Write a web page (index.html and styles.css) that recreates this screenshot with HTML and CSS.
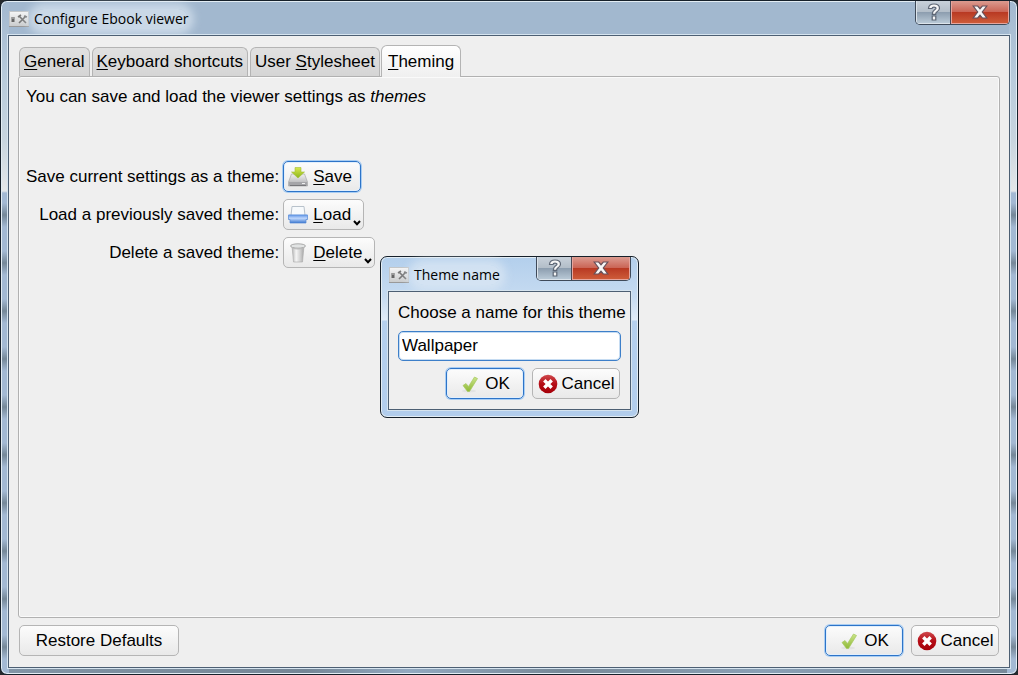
FILE: index.html
```html
<!DOCTYPE html>
<html lang="en">
<head>
<meta charset="utf-8">
<title>Configure Ebook viewer</title>
<link rel="stylesheet" href="styles.css">
</head>
<body>
<svg class="defs" aria-hidden="true">
  <defs>
    <linearGradient id="tool-bg" x2="0" y2="1"><stop stop-color="#f6f6f6"/><stop offset="1" stop-color="#c9cbcc"/></linearGradient>
    <linearGradient id="green" x2="0" y2="1"><stop stop-color="#cbe48a"/><stop offset="1" stop-color="#8fb936"/></linearGradient>
    <linearGradient id="arrow" x2="0" y2="1"><stop stop-color="#d8e84e"/><stop offset="1" stop-color="#8cb61d"/></linearGradient>
    <linearGradient id="red" x2="0" y2="1"><stop stop-color="#cf4a4e"/><stop offset=".5" stop-color="#b50d16"/><stop offset="1" stop-color="#a50009"/></linearGradient>
    <linearGradient id="drive" x2="0" y2="1"><stop stop-color="#f1f1f1"/><stop offset="1" stop-color="#a9a9ab"/></linearGradient>
    <linearGradient id="blue" x2="0" y2="1"><stop stop-color="#7eaaf0"/><stop offset=".45" stop-color="#b9d3fa"/><stop offset="1" stop-color="#3c78d0"/></linearGradient>
    <linearGradient id="can"><stop stop-color="#b5b5b5"/><stop offset=".35" stop-color="#f5f5f5"/><stop offset=".7" stop-color="#cfcfcf"/><stop offset="1" stop-color="#a5a5a5"/></linearGradient>
    <symbol id="i-tool" viewBox="0 0 20 16">
      <rect x=".5" y=".5" width="19" height="15" fill="url(#tool-bg)" stroke="#c3c6c8"/>
      <path d="M0 15.5h20" stroke="#999"/>
      <rect x="2.500" y="6" width="3" height="5" fill="#666"/><path d="M3 7h2" stroke="#ccc"/>
      <path d="M10 5l7 7M17 5l-7 7" stroke="#777" stroke-width="1.600"/><path d="M9 6l3-2M15 5l3 1" stroke="#777" stroke-width="1.600"/>
    </symbol>
    <symbol id="i-check" viewBox="0 0 20 20">
      <ellipse cx="9" cy="17" rx="7" ry="1.500" fill="#e2e2e2"/>
      <path d="M3 11.500l3-2 2.500 3L14.500 3l3 1.500L9.500 17.500H7.500z" fill="url(#green)" stroke="#a5c85e" stroke-width=".7"/>
    </symbol>
    <symbol id="i-cancel" viewBox="0 0 20 20">
      <circle cx="10" cy="10" r="9.300" fill="url(#red)"/>
      <path d="M6.300 6.300l7.400 7.400M13.700 6.300l-7.400 7.400" stroke="#fff" stroke-width="3.400"/>
    </symbol>
    <symbol id="i-save" viewBox="0 0 20 20">
      <path d="M3.500 7h13l3 8v4H.5v-4z" fill="url(#drive)" stroke="#aaa" stroke-width=".7"/>
      <path d="M1 15h18v4H1z" fill="#a5a5a8"/><path d="M2 18.500h16" stroke="#77777a"/><path d="M14 16.500h3" stroke="#eee"/>
      <path d="M7 .5h6V5h3.500L10 11 3.500 5H7z" fill="url(#arrow)" stroke="#a2bf37" stroke-width=".6"/>
    </symbol>
    <symbol id="i-load" viewBox="0 0 20 20">
      <path d="M4 1.500h12l1 9H3z" fill="#f7fafc" stroke="#b8c2cb"/>
      <path d="M.5 10h19v4.500H18v3.500H2v-3.500H.5z" fill="url(#blue)" stroke="#5386d4" stroke-width=".7"/>
      <path d="M.5 10.500h19" stroke="#6b9ce6" stroke-width="1.500"/>
    </symbol>
    <symbol id="i-trash" viewBox="0 0 20 20">
      <path d="M4 3h12l-1.500 16h-9z" fill="url(#can)" stroke="#aaa" stroke-width=".6"/>
      <ellipse cx="10" cy="3" rx="7.500" ry="2.200" fill="#e2e4e4" stroke="#989898" stroke-width=".8"/>
      <path d="M4 4.500c3 2 9 2 12 0" fill="none" stroke="#bbb"/>
    </symbol>
    <symbol id="i-help" viewBox="0 0 14 18">
      <path d="M1.500 5.500C1.500 2 4 1 7 1s5.500 1.500 5.500 4.300c0 2.200-1.500 3-3 4-.7.500-.8 1-.8 2H5.300c0-2.300.5-3.200 2-4.200C8.400 6.400 9 6 9 5.300c0-.8-.8-1.200-2-1.200S5.100 4.500 5 5.500zM5.200 13h3.600v4H5.200z" fill="#f5f5f5" stroke="#5d6675" stroke-width="1.200"/>
    </symbol>
    <symbol id="i-x" viewBox="0 0 16 14">
      <path d="M1.200 1h4.500L8 3.700 10.300 1h4.500l-4.500 6 4.500 6h-4.500L8 10.300 5.700 13H1.200l4.500-6z" fill="#f7f7f7" stroke="#68515a" stroke-width="1.200"/>
    </symbol>
    <symbol id="i-down" viewBox="0 0 8 6">
      <path d="M1 1l3 3.200L7 1" fill="none" stroke="#000" stroke-width="2"/>
    </symbol>
  </defs>
</svg>

<main class="window">
  <header class="titlebar">
    <svg class="app-icon"><use href="#i-tool"/></svg>
    <h1 class="title">Configure Ebook viewer</h1>
    <div class="controls">
      <button class="control" aria-label="Help"><svg class="glyph-help"><use href="#i-help"/></svg></button>
      <button class="control close" aria-label="Close"><svg class="glyph-x"><use href="#i-x"/></svg></button>
    </div>
  </header>
  <div class="client">
    <div class="tabs" role="tablist">
      <button class="tab" role="tab"><u>G</u>eneral</button>
      <button class="tab" role="tab"><u>K</u>eyboard shortcuts</button>
      <button class="tab" role="tab">User <u>S</u>tylesheet</button>
      <button class="tab active" role="tab" aria-selected="true"><u>T</u>heming</button>
    </div>
    <section class="pane" role="tabpanel">
      <p class="intro">You can save and load the viewer settings as <em>themes</em></p>
      <div class="form">
        <label for="save">Save current settings as a theme:</label>
        <button id="save" class="button focus"><svg class="icon"><use href="#i-save"/></svg><span><u>S</u>ave</span></button>
        <label for="load">Load a previously saved theme:</label>
        <button id="load" class="button menu"><svg class="icon"><use href="#i-load"/></svg><span><u>L</u>oad</span><svg class="down"><use href="#i-down"/></svg></button>
        <label for="delete">Delete a saved theme:</label>
        <button id="delete" class="button menu"><svg class="icon"><use href="#i-trash"/></svg><span><u>D</u>elete</span><svg class="down"><use href="#i-down"/></svg></button>
      </div>
    </section>
    <footer class="actions">
      <button class="button restore">Restore Defaults</button>
      <button class="button ok focus"><svg class="icon"><use href="#i-check"/></svg>OK</button>
      <button class="button cancel"><svg class="icon"><use href="#i-cancel"/></svg>Cancel</button>
    </footer>
  </div>
</main>

<div class="window dialog" role="dialog" aria-labelledby="dialog-title">
  <header class="titlebar">
    <svg class="app-icon"><use href="#i-tool"/></svg>
    <h2 class="title" id="dialog-title">Theme name</h2>
    <div class="controls">
      <button class="control" aria-label="Help"><svg class="glyph-help"><use href="#i-help"/></svg></button>
      <button class="control close" aria-label="Close"><svg class="glyph-x"><use href="#i-x"/></svg></button>
    </div>
  </header>
  <form class="client">
    <label for="name">Choose a name for this theme</label>
    <input id="name" class="field" type="text" value="Wallpaper">
    <div class="actions">
      <button type="button" class="button ok focus"><svg class="icon"><use href="#i-check"/></svg>OK</button>
      <button type="button" class="button cancel"><svg class="icon"><use href="#i-cancel"/></svg>Cancel</button>
    </div>
  </form>
</div>
</body>
</html>
```
FILE: styles.css
```css
* { box-sizing: border-box; }

body {
  margin: 0;
  background: #25292c;
  color: #000;
  font: 17px/22px "Liberation Sans", Arial, sans-serif;
}

button, input { font: inherit; color: inherit; margin: 0; }
svg { flex: none; }
.defs { position: absolute; width: 0; height: 0; }

.window {
  display: flex;
  flex-direction: column;
  min-height: 100vh;
  padding: 0 7px 6px;
  border: 1px solid #16202a;
  border-radius: 7px;
  box-shadow: inset 0 0 0 1px #e3edf4;
  background:
    linear-gradient(90deg, transparent 8px, #a2b8cf 8px, #a2b8cf calc(100% - 8px), transparent calc(100% - 8px)) 0 0 / 100% 34px no-repeat,
    linear-gradient(#a2b8cf 0, #b9ccdc 80px, #c8d5df 140px, #e4e7e9 190px, transparent 192px),
    linear-gradient(90deg, transparent 8px, #8294a5 8px, #758696 30%, #93a9c0 40%, #788998 55%, #8ba0b5 75%, #788999 99%, transparent 99%) 0 100% / 100% 7px no-repeat,
    repeating-linear-gradient(#a3b9d3 0, #a3b9d3 10px, #758898 22px, #a3b9d3 34px, #a3b9d3 48px);
}

.titlebar {
  display: flex;
  align-items: flex-start;
  height: 34px;
}
.app-icon { width: 20px; height: 16px; margin: 10px 5px 0 1px; }
.title {
  margin: 8px 0 0;
  border-radius: 12px;
  background: rgba(222, 234, 245, .65);
  box-shadow: 0 0 8px 6px rgba(222, 234, 245, .65);
  font: 14px/20px "Open Sans", "Noto Sans", sans-serif;
}
.controls {
  display: flex;
  margin-left: auto;
  border: 1px solid #3f4a59;
  border-top: 0;
  border-radius: 0 0 5px 5px;
  overflow: hidden;
}
.control {
  display: flex;
  align-items: center;
  justify-content: center;
  width: 35px;
  height: 23px;
  padding: 0;
  border: 1px solid #dce4eb;
  border-top: 0;
  background: linear-gradient(#c8d1da, #b3bec9 48%, #8b9cae 50%, #b8c8d5);
}
.control.close {
  width: 58px;
  border-color: #e7a59d;
  box-shadow: -1px 0 #4b4853;
  background: linear-gradient(#dc9b90, #cb6657 48%, #b83822 50%, #cd5b39);
}
.glyph-help { width: 14px; height: 18px; }
.glyph-x { width: 16px; height: 14px; }

.client {
  display: flex;
  flex: 1;
  flex-direction: column;
  padding: 9px 9px 11px;
  border: 1px solid #4d5f73;
  box-shadow: 0 0 0 1px #d6e4ef;
  background: #efefef;
}

.tabs { display: flex; align-items: flex-end; gap: 2px; padding-left: 1px; }
.tab {
  height: 29px;
  padding: 0 4px;
  border: 1px solid #b4b4b4;
  border-bottom: 0;
  border-radius: 6px 6px 0 0;
  background: linear-gradient(#e1e1e1, #d5d5d5);
  white-space: nowrap;
}
.tab.active {
  z-index: 1;
  height: 32px;
  margin: 0 0 -1px -1px;
  padding: 0 6px;
  background: linear-gradient(#fff, #efefef);
}

.pane {
  flex: 1;
  padding: 9px 7px;
  border: 1px solid #b1b1b1;
  border-radius: 3px;
  box-shadow: inset 0 0 0 1px #fafafa;
}
.intro { margin: 0 0 53px; }
.form {
  display: grid;
  grid-template-columns: max-content max-content;
  align-items: center;
  justify-items: start;
  gap: 7px 4px;
}
.form label { justify-self: end; }

u { text-underline-offset: 2px; text-decoration-thickness: 1px; }

.button {
  display: flex;
  align-items: center;
  justify-content: center;
  gap: 5px;
  height: 31px;
  padding: 0 8px 0 4px;
  border: 1px solid #b5b5b5;
  border-radius: 5px;
  background: linear-gradient(#fcfcfc, #e9e9e9);
  white-space: nowrap;
}
.button.focus {
  border-color: #2d74c8;
  box-shadow: 0 0 0 1px #a9cdf2, inset 0 0 0 1px #e2effc;
}
.button.menu { padding-right: 2px; }
.icon { width: 20px; height: 20px; }
.down { align-self: flex-end; width: 8px; height: 6px; margin: 0 0 3px -3px; }

.actions { display: flex; gap: 8px; margin: 7px 1px 0; }
.button.restore { width: 160px; margin-right: auto; padding: 0; }
.button.ok { width: 78px; padding: 0; }
.button.cancel { width: 88px; padding: 0; gap: 4px; }

.dialog {
  position: absolute;
  left: 380px;
  top: 256px;
  width: 259px;
  min-height: 162px;
  padding-bottom: 7px;
  background: linear-gradient(#b3cfec 0, #c6dbf1 40px, #e0ebf7 63px, #b5d0ee 64px, #b2cdec);
}
.dialog .client { padding: 10px 9px; }
.dialog .client label { white-space: nowrap; }
.field {
  width: 100%;
  height: 30px;
  margin-top: 7px;
  padding: 0 3px;
  border: 1px solid #3d7fc9;
  border-radius: 5px;
  outline: 0;
  box-shadow: inset 0 0 0 1px #c6dcf2;
  background: #fff;
}
.dialog .actions { justify-content: flex-end; }
```
